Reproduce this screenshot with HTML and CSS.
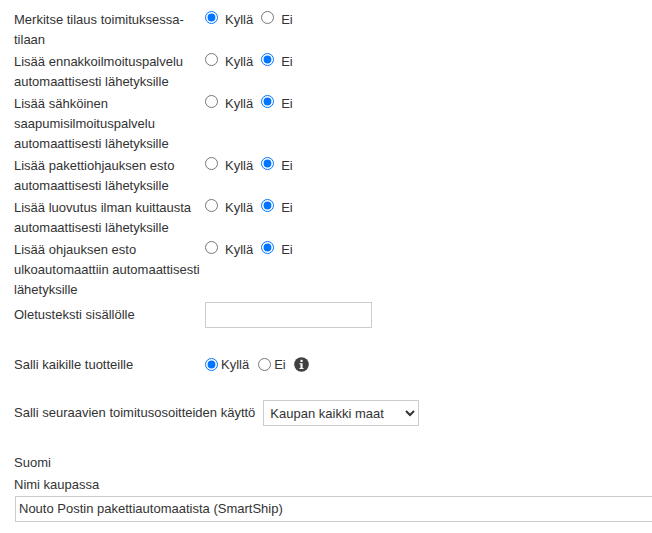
FILE: index.html
```html
<!DOCTYPE html>
<html lang="fi">
<head>
    <meta charset="UTF-8">
    <meta name="viewport" content="width=device-width, initial-scale=1.0">
    <title>Nouto Postin pakettiautomaatista</title>
    <link rel="stylesheet" href="styles.css">
</head>
<body>

    <div class="form">
        <div class="row">
            <label class="label">Merkitse tilaus toimituksessa-tilaan</label>
            <div class="choices">
                <input type="radio" name="r1" checked><span class="option">Kyllä</span>
                <input type="radio" name="r1"><span class="option">Ei</span>
            </div>
        </div>
        <div class="row">
            <label class="label">Lisää ennakkoilmoituspalvelu automaattisesti lähetyksille</label>
            <div class="choices">
                <input type="radio" name="r2"><span class="option">Kyllä</span>
                <input type="radio" name="r2" checked><span class="option">Ei</span>
            </div>
        </div>
        <div class="row">
            <label class="label">Lisää sähköinen saapumisilmoituspalvelu automaattisesti lähetyksille</label>
            <div class="choices">
                <input type="radio" name="r3"><span class="option">Kyllä</span>
                <input type="radio" name="r3" checked><span class="option">Ei</span>
            </div>
        </div>
        <div class="row">
            <label class="label">Lisää pakettiohjauksen esto automaattisesti lähetyksille</label>
            <div class="choices">
                <input type="radio" name="r4"><span class="option">Kyllä</span>
                <input type="radio" name="r4" checked><span class="option">Ei</span>
            </div>
        </div>
        <div class="row">
            <label class="label">Lisää luovutus ilman kuittausta automaattisesti lähetyksille</label>
            <div class="choices">
                <input type="radio" name="r5"><span class="option">Kyllä</span>
                <input type="radio" name="r5" checked><span class="option">Ei</span>
            </div>
        </div>
        <div class="row">
            <label class="label">Lisää ohjauksen esto ulkoautomaattiin automaattisesti lähetyksille</label>
            <div class="choices">
                <input type="radio" name="r6"><span class="option">Kyllä</span>
                <input type="radio" name="r6" checked><span class="option">Ei</span>
            </div>
        </div>

        <div class="row row-text">
            <label class="label">Oletusteksti sisällölle</label>
            <input type="text" class="text-input">
        </div>

        <div class="row row-allow">
            <label class="label">Salli kaikille tuotteille</label>
            <div class="choices choices-tight">
                <input type="radio" name="r7" checked><span class="option">Kyllä</span>
                <input type="radio" name="r7"><span class="option">Ei</span>
                <svg class="info" width="15" height="15" viewBox="0 0 16 16">
                    <circle cx="8" cy="8" r="7.8" fill="#404040"/>
                    <rect x="6.9" y="3" width="2.3" height="2.3" rx="0.6" fill="#fff"/>
                    <path d="M5.8 6.6h3.3v5h1.1v1.2H5.8v-1.2h1.1V7.8H5.8z" fill="#fff"/>
                </svg>
            </div>
        </div>

        <div class="row row-select">
            <label class="label-wide">Salli seuraavien toimitusosoitteiden käyttö</label>
            <select class="select">
                <option>Kaupan kaikki maat</option>
            </select>
        </div>

        <div class="lang">Suomi</div>
        <div class="name-label">Nimi kaupassa</div>
        <input type="text" class="name-input" value="Nouto Postin pakettiautomaatista (SmartShip)">
    </div>

</body>
</html>
```

FILE: styles.css
```css
body {
    margin: 0;
    background: #fff;
    color: #333;
    font-family: "Liberation Sans", Arial, sans-serif;
    font-size: 13px;
    line-height: 20px;
    overflow: hidden;
}

.form {
    padding: 10px 0 0 14px;
}

.row {
    display: flex;
    align-items: flex-start;
    margin-bottom: 2px;
}

.label {
    width: 191px;
    box-sizing: border-box;
}

.choices {
    display: flex;
    align-items: flex-start;
}

.choices input {
    margin: 1px 7px 0 0;
    width: 13px;
    height: 13px;
}

.option {
    margin-right: 8px;
}

.row-text {
    margin-top: 2px;
    align-items: center;
}

.text-input {
    width: 167px;
    height: 26px;
    box-sizing: border-box;
    border: 1px solid #ccc;
    margin: 0;
    padding: 0 6px;
}

.row-allow {
    margin-top: 27px;
}

.choices-tight {
    align-items: center;
}

.choices-tight input {
    margin: 0 3px 2px 0;
}

.choices-tight .option {
    margin-right: 9px;
}

.info {
    margin-left: -1px;
    margin-bottom: 1px;
}

.row-select {
    margin-top: 25px;
    align-items: center;
}

.label-wide {
    margin-right: 8px;
}

.select {
    width: 156px;
    height: 26px;
    border: 1px solid #ccc;
    border-radius: 0;
    background: #fff;
    color: #333;
    font-family: inherit;
    font-size: 13px;
    padding: 0 2px;
    margin: 0;
}

.lang {
    margin-top: 27px;
}

.name-label {
    margin-top: 2px;
}

.name-input {
    display: block;
    width: calc(100% - 1px);
    height: 26px;
    box-sizing: border-box;
    border: 1px solid #ccc;
    border-right: 0;
    margin: 1px 0 0 1px;
    padding: 0 3px 2px;
    color: #333;
    font-family: inherit;
    font-size: 13px;
}
```
